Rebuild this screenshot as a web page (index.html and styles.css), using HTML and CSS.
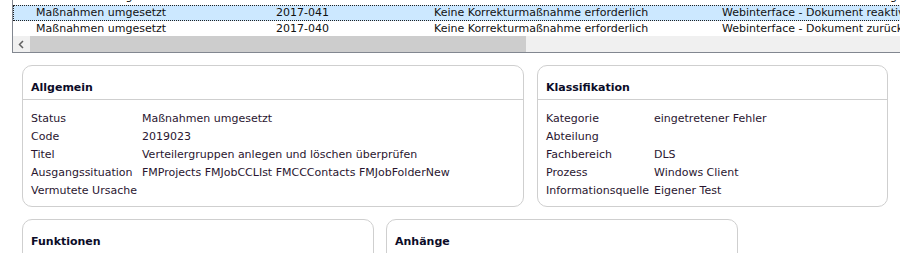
FILE: index.html
```html
<!DOCTYPE html>
<html lang="de">
<head>
<meta charset="utf-8">
<title>Maßnahmen</title>
<link rel="stylesheet" href="styles.css">
</head>
<body>
<div class="list">
  <div class="viewport">
    <div class="rows">
      <div class="row">
        <span class="c1">Maßnahmen umgesetzt</span><span class="c2">2017-042</span><span class="c3">Keine Korrekturmaßnahme erforderlich</span><span class="c4">Webinterface - Dokument anlegen</span>
      </div>
      <div class="row selected">
        <span class="c1">Maßnahmen umgesetzt</span><span class="c2">2017-041</span><span class="c3">Keine Korrekturmaßnahme erforderlich</span><span class="c4">Webinterface - Dokument reaktivieren</span>
      </div>
      <div class="row">
        <span class="c1">Maßnahmen umgesetzt</span><span class="c2">2017-040</span><span class="c3">Keine Korrekturmaßnahme erforderlich</span><span class="c4">Webinterface - Dokument zurückziehen</span>
      </div>
    </div>
  </div>
  <div class="hscroll">
    <div class="arrow">
      <svg width="7" height="9" viewBox="0 0 7 9"><path d="M5 1 L1.5 4.5 L5 8" fill="none" stroke="#606060" stroke-width="1.5"/></svg>
    </div>
    <div class="thumb"></div>
  </div>
</div>

<div class="panels top">
  <section class="panel wide">
    <h2 class="ph">Allgemein</h2>
    <div class="pb">
      <span class="lbl">Status</span><span class="val">Maßnahmen umgesetzt</span>
      <span class="lbl">Code</span><span class="val">2019023</span>
      <span class="lbl">Titel</span><span class="val">Verteilergruppen anlegen und löschen überprüfen</span>
      <span class="lbl">Ausgangssituation</span><span class="val">FMProjects FMJobCCLIst FMCCContacts FMJobFolderNew</span>
      <span class="lbl">Vermutete Ursache</span><span class="val"></span>
    </div>
  </section>
  <section class="panel narrow">
    <h2 class="ph">Klassifikation</h2>
    <div class="pb">
      <span class="lbl">Kategorie</span><span class="val">eingetretener Fehler</span>
      <span class="lbl">Abteilung</span><span class="val"></span>
      <span class="lbl">Fachbereich</span><span class="val">DLS</span>
      <span class="lbl">Prozess</span><span class="val">Windows Client</span>
      <span class="lbl">Informationsquelle</span><span class="val">Eigener Test</span>
    </div>
  </section>
</div>

<div class="panels bottom">
  <section class="panel">
    <h2 class="ph">Funktionen</h2>
    <div class="pb"></div>
  </section>
  <section class="panel">
    <h2 class="ph">Anhänge</h2>
    <div class="pb"></div>
  </section>
</div>
</body>
</html>
```

FILE: styles.css
```css
html, body {
  margin: 0;
  padding: 0;
  background: #fff;
  overflow: hidden;
}
body {
  font-family: "DejaVu Sans", Verdana, sans-serif;
  font-size: 11px;
  color: #2a1630;
}

/* list grid */
.list {
  margin-left: 12px;
  width: 1000px;
  border-left: 1px solid #828790;
  border-bottom: 1px solid #828790;
}
.viewport {
  height: 31px;
  overflow: hidden;
  padding-top: 5px;
}
.rows {
  margin-top: -16px;
}
.row {
  display: flex;
  height: 16px;
  line-height: 16px;
  white-space: nowrap;
  color: #111;
  box-sizing: border-box;
}
.row.selected {
  background: #cce8ff;
  outline: 1px dotted #222;
  outline-offset: -1px;
}
.c1 { width: 240px; padding-left: 23px; flex: none; }
.c2 { width: 158px; flex: none; }
.c3 { width: 288px; flex: none; }
.c4 { flex: none; }

.hscroll {
  display: flex;
  height: 16px;
  background: #f0f0f0;
}
.arrow {
  width: 17px;
  display: flex;
  align-items: center;
  justify-content: center;
}
.thumb {
  width: 496px;
  background: #cdcdcd;
}

/* panels */
.panels {
  display: flex;
  padding-left: 22px;
  margin-top: 12px;
}
.panels.top {
  gap: 13px;
}
.panels.bottom {
  gap: 12px;
}
.panel {
  width: 350px;
  border: 1px solid #cfcfcf;
  border-radius: 10px;
}
.panel.wide {
  width: 500px;
}
.panel.narrow {
  width: 349px;
}
.ph {
  margin: 0;
  font-size: 11px;
  font-weight: bold;
  color: #0c0c28;
  line-height: 13px;
  padding: 15px 8px 5px;
  border-bottom: 1px solid #cfcfcf;
}
.pb {
  display: grid;
  grid-template-columns: max-content 1fr;
  column-gap: 5px;
  padding: 10px 8px 6px;
  line-height: 18px;
  white-space: nowrap;
}
.lbl, .val {
  color: #2a1630;
}
```
